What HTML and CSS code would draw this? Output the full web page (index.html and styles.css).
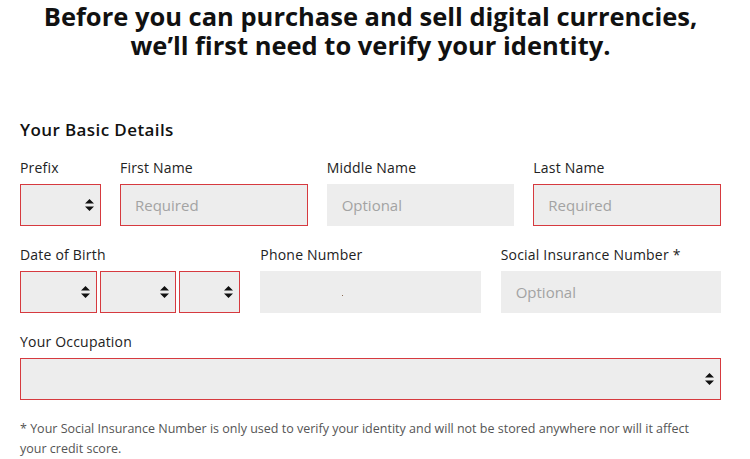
FILE: index.html
```html
<!DOCTYPE html>
<html lang="en">
<head>
    <meta charset="UTF-8">
    <title>Verify your identity</title>
    <link rel="stylesheet" href="styles.css">
</head>
<body>

    <h1 class="intro">Before you can purchase and sell digital currencies,<br>we’ll first need to verify your identity.</h1>

    <form class="details">
        <h2>Your Basic Details</h2>

        <!-- Names -->
        <div class="row names">
            <label class="field">
                <span class="label">Prefix</span>
                <span class="select required">
                    <select></select>
                    <svg class="arrows" width="9" height="12" viewBox="0 0 9 12"><path d="M4.5 0L9 4.5H0z M0 7.5h9L4.5 12z" fill="#111"/></svg>
                </span>
            </label>
            <label class="field">
                <span class="label">First Name</span>
                <input class="required" type="text" placeholder="Required">
            </label>
            <label class="field">
                <span class="label">Middle Name</span>
                <input type="text" placeholder="Optional">
            </label>
            <label class="field">
                <span class="label">Last Name</span>
                <input class="required" type="text" placeholder="Required">
            </label>
        </div>

        <!-- Birth, phone, SIN -->
        <div class="row personal">
            <div class="field">
                <span class="label">Date of Birth</span>
                <div class="dob">
                    <span class="select required">
                        <select></select>
                        <svg class="arrows" width="9" height="12" viewBox="0 0 9 12"><path d="M4.5 0L9 4.5H0z M0 7.5h9L4.5 12z" fill="#111"/></svg>
                    </span>
                    <span class="select required">
                        <select></select>
                        <svg class="arrows" width="9" height="12" viewBox="0 0 9 12"><path d="M4.5 0L9 4.5H0z M0 7.5h9L4.5 12z" fill="#111"/></svg>
                    </span>
                    <span class="select required">
                        <select></select>
                        <svg class="arrows" width="9" height="12" viewBox="0 0 9 12"><path d="M4.5 0L9 4.5H0z M0 7.5h9L4.5 12z" fill="#111"/></svg>
                    </span>
                </div>
            </div>
            <label class="field">
                <span class="label">Phone Number</span>
                <span class="phone"><input type="tel"><i class="dot"></i></span>
            </label>
            <label class="field">
                <span class="label">Social Insurance Number *</span>
                <input type="text" placeholder="Optional">
            </label>
        </div>

        <!-- Occupation -->
        <label class="field">
            <span class="label">Your Occupation</span>
            <span class="select required">
                <select></select>
                <svg class="arrows" width="9" height="12" viewBox="0 0 9 12"><path d="M4.5 0L9 4.5H0z M0 7.5h9L4.5 12z" fill="#111"/></svg>
            </span>
        </label>

        <p class="note">* Your Social Insurance Number is only used to verify your identity and will not be stored anywhere nor will it affect your credit score.</p>
    </form>

</body>
</html>
```

FILE: styles.css
```css
/* Global */
* {
    margin: 0;
    padding: 0;
    box-sizing: border-box;
    font-family: 'Open Sans', sans-serif;
}

body {
    background: #fff;
    color: #222;
    width: 750px;
    padding: 2px 29px 0 20px;
}

/* Heading */
.intro {
    font-size: 25.5px;
    font-weight: 700;
    line-height: 29px;
    color: #111;
    text-align: center;
}

.details {
    margin-top: 59px;
}

.details h2 {
    font-size: 17px;
    font-weight: 600;
    color: #111;
    line-height: 22px;
    letter-spacing: 0.4px;
    margin-bottom: 17px;
}

/* Rows */
.row {
    display: grid;
    column-gap: 19px;
    margin-bottom: 19px;
}

.names {
    grid-template-columns: 81px 1fr 1fr 1fr;
}

.personal {
    grid-template-columns: 1fr 1fr 1fr;
    column-gap: 20px;
}

.field {
    display: flex;
    flex-direction: column;
}

.label {
    font-size: 14px;
    line-height: 20px;
    color: #222;
    letter-spacing: 0.2px;
    margin-bottom: 6px;
}

/* Inputs */
input, select {
    width: 100%;
    height: 42px;
    border: 1px solid transparent;
    background: #ededed;
    font-size: 15px;
    padding: 0 14px;
    color: #333;
    outline: none;
    appearance: none;
    -webkit-appearance: none;
    border-radius: 0;
}

input::placeholder {
    color: #a3a3a3;
}

input.required,
.select.required select {
    border-color: #d63a3f;
}

.select {
    position: relative;
    display: block;
}

.select .arrows {
    position: absolute;
    right: 7px;
    top: 15px;
    pointer-events: none;
}

.dob {
    display: grid;
    grid-template-columns: 77px 76px 1fr;
    column-gap: 3px;
}

.phone {
    position: relative;
    display: block;
}

.phone .dot {
    position: absolute;
    left: 82px;
    top: 24px;
    width: 1px;
    height: 1px;
    background: #8a6a50;
}

/* Footnote */
.note {
    margin-top: 19px;
    max-width: 685px;
    font-size: 12.5px;
    line-height: 20px;
    color: #555;
}
```
